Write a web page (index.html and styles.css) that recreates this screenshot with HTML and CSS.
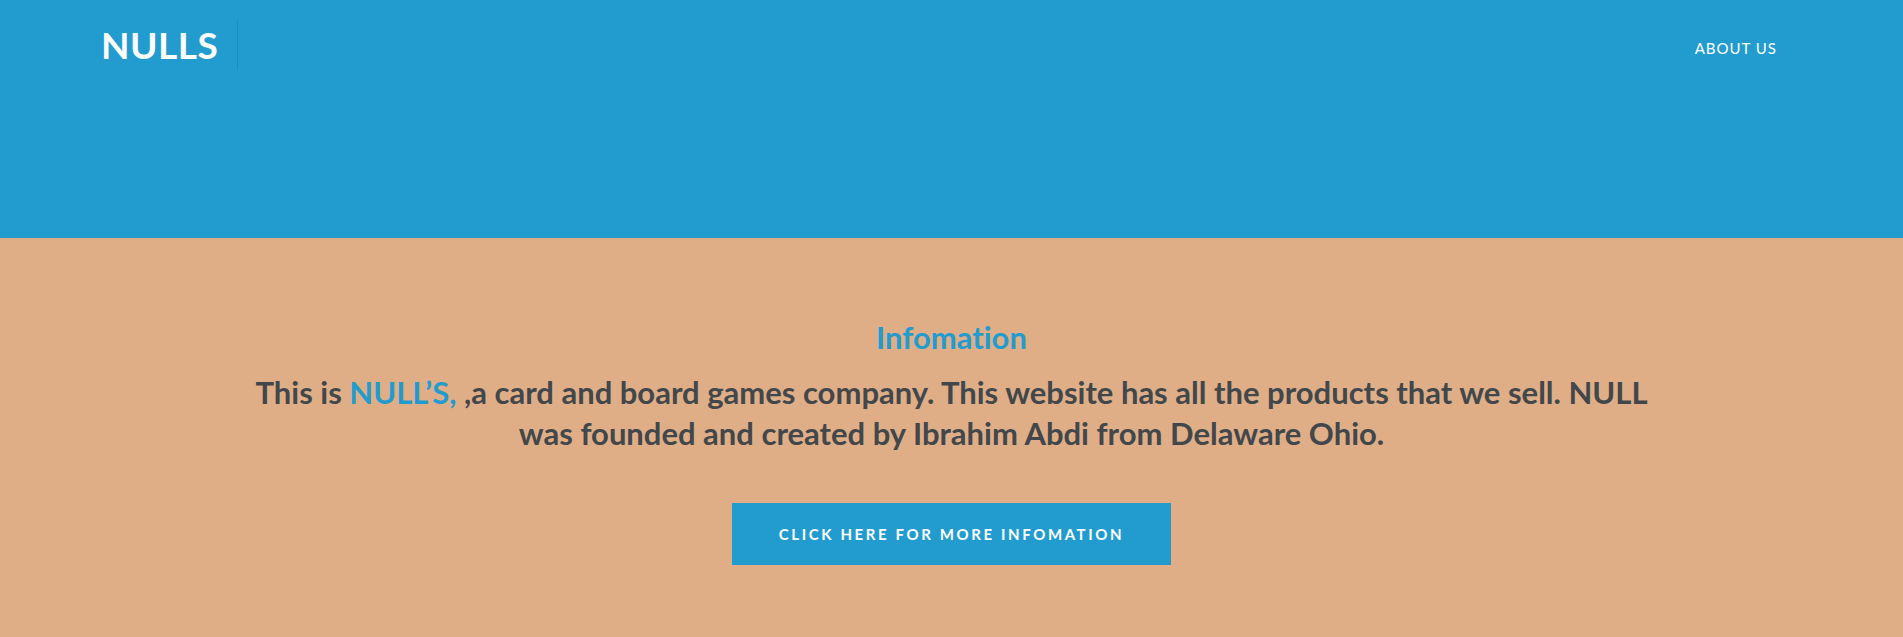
FILE: index.html
```html
<!DOCTYPE html>
<html>
<head>
<meta charset="utf-8">
<link rel="stylesheet" href="styles.css">
</head>
<body>
<header class="site-header">
  <div class="header-inner">
    <div class="brand">
      <span class="logo">NULLS</span>
      <span class="divider"></span>
    </div>
    <nav class="nav">
      <a class="nav-link" href="#">ABOUT US</a>
    </nav>
  </div>
</header>
<section class="info">
  <h2 class="info-title">Infomation</h2>
  <p class="info-text">This is <span class="accent">NULL’S,</span> ,a card and board games company. This website has all the products that we sell. NULL was founded and created by Ibrahim Abdi from Delaware Ohio.</p>
  <a class="btn" href="#">CLICK HERE FOR MORE INFOMATION</a>
</section>
</body>
</html>
```

FILE: styles.css
```css
html, body {
  margin: 0;
  padding: 0;
}
body {
  font-family: Lato, "Open Sans", sans-serif;
  font-variant-ligatures: none;
  background: #dfae87;
  height: 637px;
  overflow: hidden;
}
.site-header {
  background: #229ccf;
  height: 238px;
}
.header-inner {
  display: flex;
  justify-content: space-between;
  align-items: flex-start;
  padding: 0 101px 0 101px;
}
.brand {
  display: flex;
  align-items: flex-start;
  padding-top: 20px;
}
.logo {
  color: #fff;
  font-weight: 700;
  font-size: 37px;
  line-height: 50px;
  letter-spacing: 0.5px;
}
.divider {
  width: 1px;
  height: 50px;
  background: #1f8dbc;
  margin-left: 19px;
}
.nav {
  padding-top: 36px;
}
.nav-link {
  color: #fff;
  text-decoration: none;
  font-size: 15px;
  letter-spacing: 1px;
  padding: 0 25px;
  line-height: 24px;
  display: block;
}
.info {
  display: flex;
  flex-direction: column;
  align-items: center;
  padding-top: 80px;
}
.info-title {
  margin: 0;
  color: #229ccf;
  font-weight: 700;
  font-size: 31px;
  line-height: 38px;
}
.info-text {
  margin: 16px 0 0;
  max-width: 1420px;
  text-align: center;
  color: #42474b;
  font-weight: 700;
  font-size: 31px;
  line-height: 41px;
}
.accent {
  color: #229ccf;
}
.btn {
  margin-top: 49px;
  width: 439px;
  height: 62px;
  display: flex;
  align-items: center;
  justify-content: center;
  background: #229ccf;
  color: #fff;
  text-decoration: none;
  font-weight: 700;
  font-size: 15px;
  letter-spacing: 2.6px;
}
```
